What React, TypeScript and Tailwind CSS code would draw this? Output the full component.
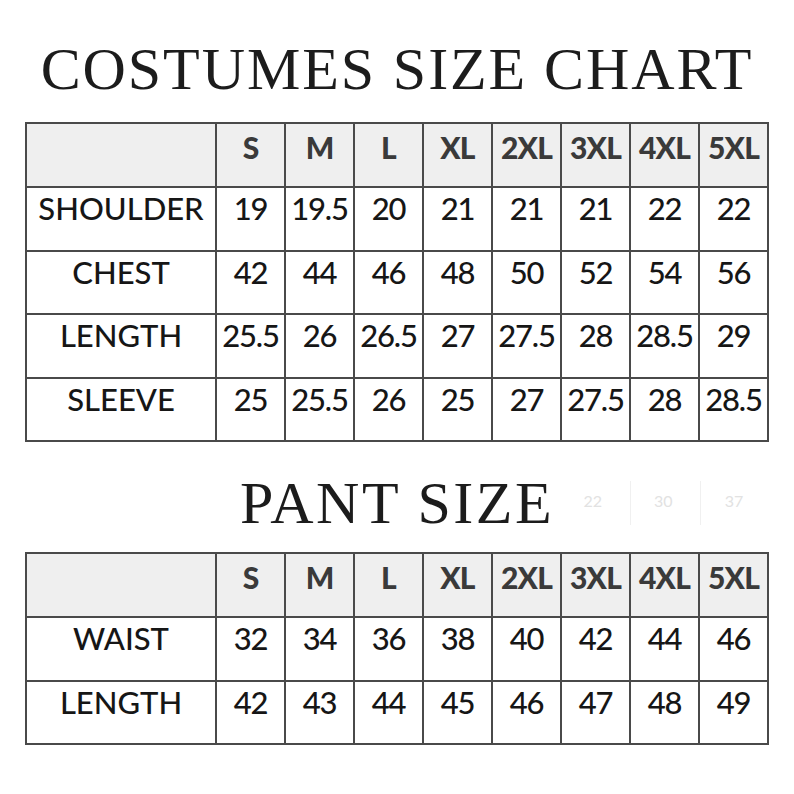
import React from 'react';

const SIZES = ['S', 'M', 'L', 'XL', '2XL', '3XL', '4XL', '5XL'];

const COSTUME_ROWS: [string, string[]][] = [
  ['SHOULDER', ['19', '19.5', '20', '21', '21', '21', '22', '22']],
  ['CHEST', ['42', '44', '46', '48', '50', '52', '54', '56']],
  ['LENGTH', ['25.5', '26', '26.5', '27', '27.5', '28', '28.5', '29']],
  ['SLEEVE', ['25', '25.5', '26', '25', '27', '27.5', '28', '28.5']],
];

const PANT_ROWS: [string, string[]][] = [
  ['WAIST', ['32', '34', '36', '38', '40', '42', '44', '46']],
  ['LENGTH', ['42', '43', '44', '45', '46', '47', '48', '49']],
];

function SizeTable({ rows }: { rows: [string, string[]][] }) {
  return (
    <table className="border-collapse border-2 border-[#4a4a4a] table-fixed w-[743px] font-['Lato',sans-serif]">
      <colgroup>
        <col className="w-[190px]" />
        {SIZES.map((s) => (
          <col key={s} className="w-[69px]" />
        ))}
      </colgroup>
      <thead>
        <tr className="h-[64px] bg-[#efefef]">
          <th className="border-2 border-[#4a4a4a]" />
          {SIZES.map((s) => (
            <th
              key={s}
              className="border-2 border-[#4a4a4a] align-top pt-[8px] text-[30px] leading-none font-black text-[#3a3a3a] tracking-[-0.8px] whitespace-nowrap"
            >
              {s}
            </th>
          ))}
        </tr>
      </thead>
      <tbody>
        {rows.map(([label, values]) => (
          <tr key={label} className="h-[63.5px] bg-white">
            <td className="border-2 border-[#4a4a4a] align-top pt-[5px] text-center text-[31px] leading-none font-medium text-[#161616]">
              {label}
            </td>
            {values.map((v, i) => (
              <td
                key={i}
                className="border-2 border-[#4a4a4a] align-top pt-[5px] text-center text-[31px] leading-none font-medium text-[#161616] whitespace-nowrap tracking-[-1.2px]"
              >
                {v}
              </td>
            ))}
          </tr>
        ))}
      </tbody>
    </table>
  );
}

export default function App() {
  return (
    <div className="w-[794px] h-[794px] bg-white flex flex-col items-center overflow-hidden">
      {/* Title */}
      <h1 className="mt-[39px] text-[60px] leading-none font-normal tracking-[1.9px] text-[#1c1c1c] font-['Liberation_Serif',serif]">
        COSTUMES SIZE CHART
      </h1>

      <div className="mt-[23px]">
        <SizeTable rows={COSTUME_ROWS} />
      </div>

      {/* Pant title with faint ghost marks from the source image */}
      <div className="relative mt-[31px] w-[743px] flex justify-center">
        <h2 className="text-[60px] leading-none font-normal tracking-[2.5px] text-[#1c1c1c] font-['Liberation_Serif',serif]">
          PANT SIZE
        </h2>
        <div className="absolute left-[558px] top-[16px] flex items-center gap-[52px] text-[16px] text-[#e2e2e2] font-['Lato',sans-serif]">
          <span>22</span>
          <span>30</span>
          <span>37</span>
        </div>
        <div className="absolute left-[604px] top-[8px] h-[44px] w-px bg-[#f0f0f0]" />
        <div className="absolute left-[674px] top-[8px] h-[44px] w-px bg-[#f0f0f0]" />
      </div>

      <div className="mt-[19px]">
        <SizeTable rows={PANT_ROWS} />
      </div>
    </div>
  );
}
